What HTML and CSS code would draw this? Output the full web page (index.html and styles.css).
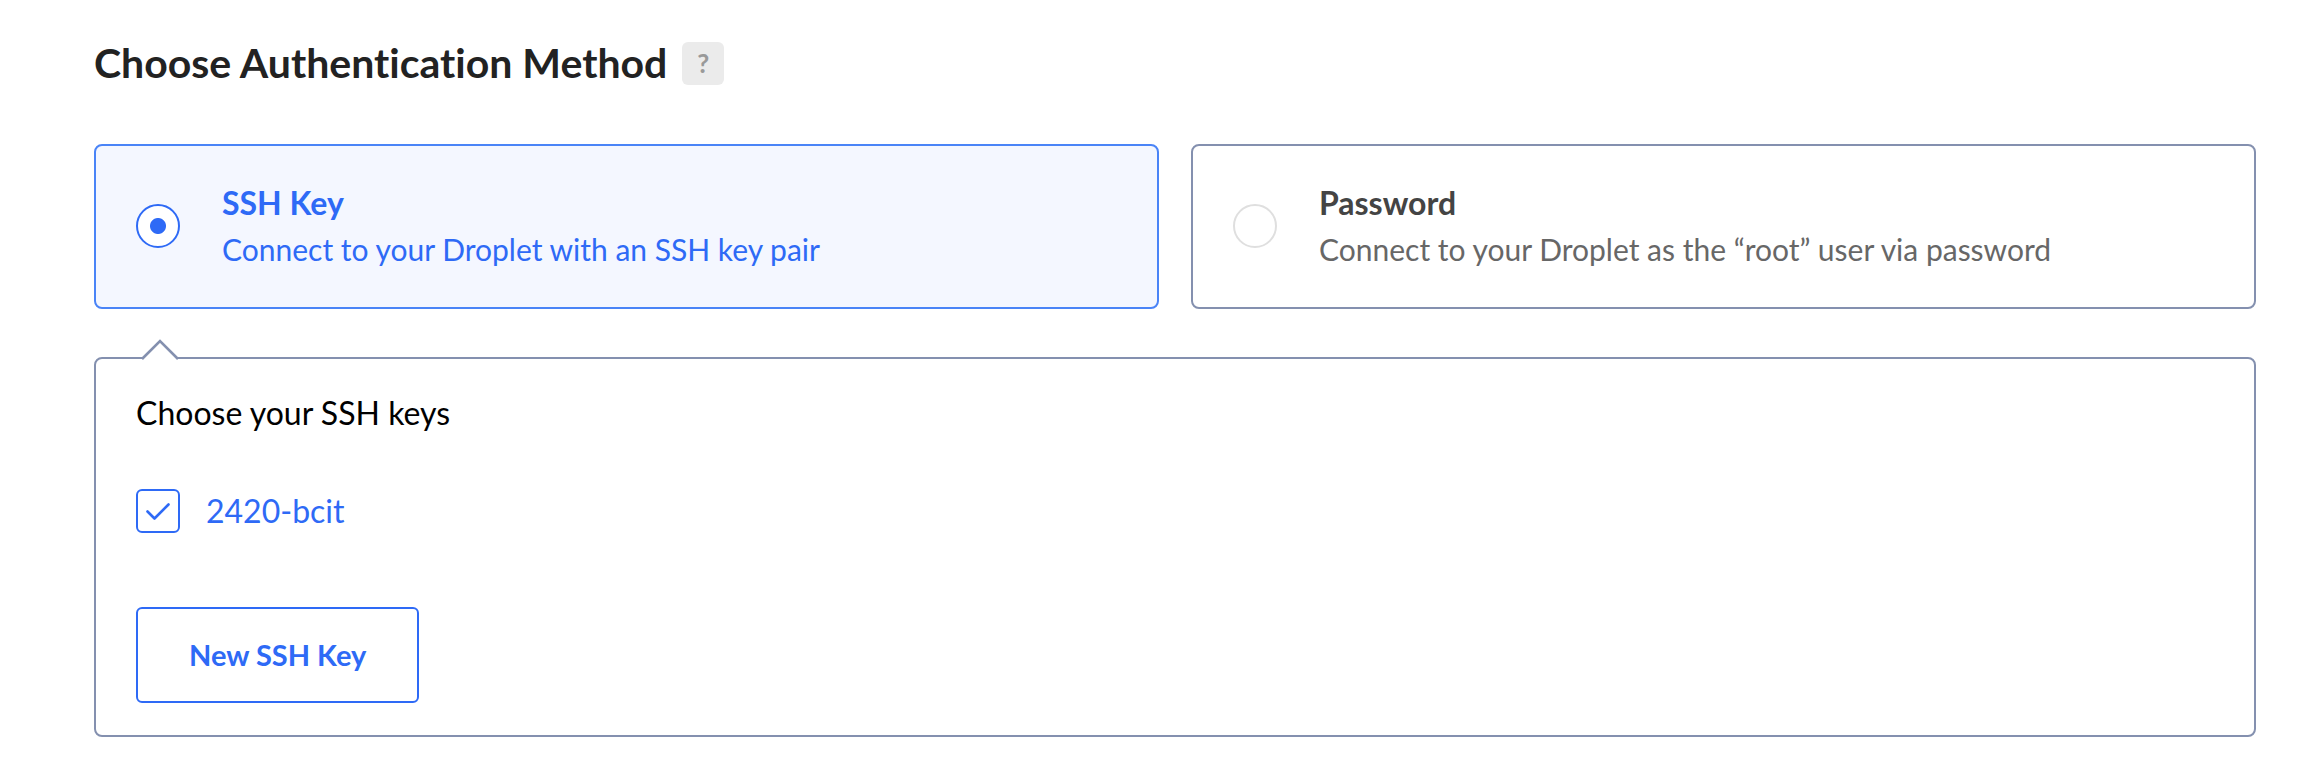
FILE: index.html
```html
<!DOCTYPE html>
<html lang="en">
<head>
<meta charset="utf-8">
<meta name="viewport" content="width=device-width, initial-scale=1">
<title>Choose Authentication Method</title>
<link rel="stylesheet" href="styles.css">
</head>
<body>
<main class="auth">
  <header class="auth-header">
    <h1 class="auth-title">Choose Authentication Method</h1>
    <button class="help" type="button" aria-label="Help">?</button>
  </header>

  <div class="methods" role="radiogroup" aria-label="Authentication method">
    <label class="method" for="method-ssh">
      <input class="method-radio" type="radio" id="method-ssh" name="method" value="ssh" checked>
      <span class="method-text">
        <span class="method-name">SSH Key</span>
        <span class="method-desc">Connect to your Droplet with an SSH key pair</span>
      </span>
    </label>
    <label class="method" for="method-password">
      <input class="method-radio" type="radio" id="method-password" name="method" value="password">
      <span class="method-text">
        <span class="method-name">Password</span>
        <span class="method-desc">Connect to your Droplet as the “root” user via password</span>
      </span>
    </label>
  </div>

  <section class="keys">
    <svg class="keys-arrow" width="40" height="22" viewBox="0 0 40 22" aria-hidden="true">
      <path d="M2 20 L20 2 L38 20 V22 H2 Z" fill="#fff"/>
      <path d="M2 20 L20 2 L38 20" fill="none" stroke="#8490af" stroke-width="2.600"/>
    </svg>
    <h2 class="keys-title">Choose your SSH keys</h2>
    <label class="key" for="key-2420">
      <span class="key-box">
        <input class="key-input" type="checkbox" id="key-2420" checked>
        <svg class="key-check" viewBox="0 0 44 44" aria-hidden="true">
          <path d="M11.500 22.500 L18.500 29.500 L32.500 15.500" fill="none" stroke="currentColor" stroke-width="2.600" stroke-linecap="round" stroke-linejoin="round"/>
        </svg>
      </span>
      <span class="key-name">2420-bcit</span>
    </label>
    <button class="new-key" type="button">New SSH Key</button>
  </section>
</main>
</body>
</html>
```
FILE: styles.css
```css
* {
  box-sizing: border-box;
}

body {
  margin: 0;
  background: #fff;
  color: #000;
  font-family: Lato, "Open Sans", sans-serif;
  font-variant-ligatures: none;
}

.auth {
  padding: 39px 48px 23px 94px;
}

.auth-header {
  display: flex;
  align-items: center;
  gap: 15px;
  height: 48px;
  margin-bottom: 57px;
}

.auth-title {
  margin: 0;
  color: #222;
  font-size: 41px;
  font-weight: 700;
  line-height: 48px;
}

.help {
  width: 42px;
  height: 43px;
  padding: 0;
  border: 0;
  border-radius: 6px;
  background: #ebebeb;
  color: #999;
  font: 700 26px/43px Lato, sans-serif;
}

.methods {
  display: grid;
  grid-template-columns: 1fr 1fr;
  gap: 32px;
  margin-bottom: 48px;
}

.method {
  display: flex;
  align-items: center;
  gap: 42px;
  min-height: 165px;
  padding: 0 40px 2px;
  border: 2px solid #8490af;
  border-radius: 8px;
  cursor: pointer;
}

.method-radio {
  appearance: none;
  flex: none;
  width: 44px;
  height: 44px;
  margin: 0;
  border: 2px solid #dfdfdf;
  border-radius: 50%;
  background: #fff;
}

.method-radio:checked {
  border-color: #2e6af6;
  background: radial-gradient(circle, #2e6af6 0 7.500px, #fff 8.500px);
}

.method-text {
  display: flex;
  flex-direction: column;
}

.method-name {
  color: #444;
  font-size: 32px;
  font-weight: 700;
  line-height: 46px;
}

.method-desc {
  color: #676767;
  font-size: 30px;
  line-height: 46px;
}

.method:has(:checked) {
  border-color: #4a84f7;
  background: #f4f7ff;
}

.method:has(:checked) .method-name,
.method:has(:checked) .method-desc {
  color: #2e6af6;
}

.keys {
  position: relative;
  display: flex;
  flex-direction: column;
  align-items: flex-start;
  padding: 32px 40px;
  border: 2px solid #8490af;
  border-radius: 8px;
}

.keys-arrow {
  position: absolute;
  top: -20px;
  left: 44px;
}

.keys-title {
  margin: 0 0 54px;
  font-size: 32px;
  font-weight: 400;
  line-height: 44px;
}

.key {
  display: flex;
  align-items: center;
  gap: 26px;
  margin-bottom: 74px;
  color: #2e6af6;
  cursor: pointer;
}

.key-box {
  display: grid;
}

.key-input,
.key-check {
  grid-area: 1 / 1;
  width: 44px;
  height: 44px;
  margin: 0;
}

.key-input {
  appearance: none;
  border: 2px solid #2e6af6;
  border-radius: 6px;
}

.key-check {
  visibility: hidden;
  pointer-events: none;
}

.key-input:checked + .key-check {
  visibility: visible;
}

.key-name {
  font-size: 32px;
  line-height: 44px;
}

.new-key {
  height: 96px;
  padding: 0 51px;
  border: 2px solid #2e6af6;
  border-radius: 6px;
  background: #fff;
  color: #2e6af6;
  font: 700 29px/44px Lato, sans-serif;
}
```
